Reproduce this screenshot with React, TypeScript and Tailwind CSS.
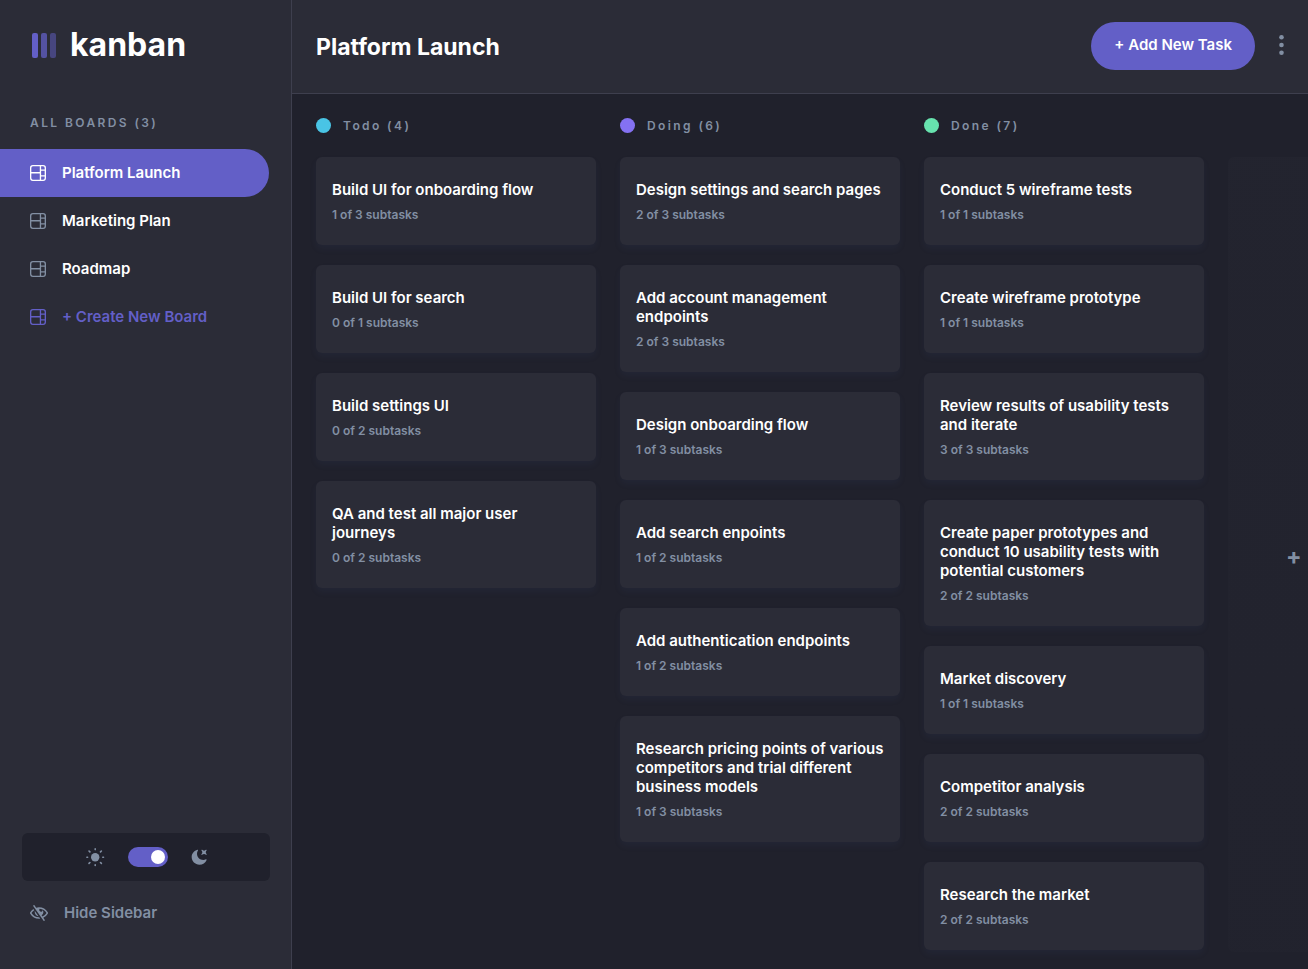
import { useState } from 'react';

type Task = { title: string; done: number; total: number };
type Column = { name: string; dot: string; tasks: Task[] };

const boards = ['Platform Launch', 'Marketing Plan', 'Roadmap'];

const columns: Column[] = [
  {
    name: 'Todo',
    dot: 'bg-[#49c4e5]',
    tasks: [
      { title: 'Build UI for onboarding flow', done: 1, total: 3 },
      { title: 'Build UI for search', done: 0, total: 1 },
      { title: 'Build settings UI', done: 0, total: 2 },
      { title: 'QA and test all major user journeys', done: 0, total: 2 },
    ],
  },
  {
    name: 'Doing',
    dot: 'bg-[#8471f2]',
    tasks: [
      { title: 'Design settings and search pages', done: 2, total: 3 },
      { title: 'Add account management endpoints', done: 2, total: 3 },
      { title: 'Design onboarding flow', done: 1, total: 3 },
      { title: 'Add search enpoints', done: 1, total: 2 },
      { title: 'Add authentication endpoints', done: 1, total: 2 },
      { title: 'Research pricing points of various competitors and trial different business models', done: 1, total: 3 },
    ],
  },
  {
    name: 'Done',
    dot: 'bg-[#67e2ae]',
    tasks: [
      { title: 'Conduct 5 wireframe tests', done: 1, total: 1 },
      { title: 'Create wireframe prototype', done: 1, total: 1 },
      { title: 'Review results of usability tests and iterate', done: 3, total: 3 },
      { title: 'Create paper prototypes and conduct 10 usability tests with potential customers', done: 2, total: 2 },
      { title: 'Market discovery', done: 1, total: 1 },
      { title: 'Competitor analysis', done: 2, total: 2 },
      { title: 'Research the market', done: 2, total: 2 },
    ],
  },
];

function BoardIcon() {
  return (
    <svg width="16" height="16" viewBox="0 0 16 16" fill="currentColor" aria-hidden="true" className="shrink-0">
      <path d="M0 2.889A2.889 2.889 0 0 1 2.889 0H13.11A2.889 2.889 0 0 1 16 2.889V13.11A2.888 2.888 0 0 1 13.111 16H2.89A2.889 2.889 0 0 1 0 13.111V2.89Zm1.333 5.555v4.667c0 .859.697 1.556 1.556 1.556h6.889V8.444H1.333Zm8.445-1.333V1.333h-6.89A1.556 1.556 0 0 0 1.334 2.89V7.11h8.445Zm1.333-1.333v4.444h3.556V5.778H11.11Zm3.556 5.778H11.11v3.11h2a1.556 1.556 0 0 0 1.556-1.555v-1.555Zm0-7.112V2.89a1.555 1.555 0 0 0-1.556-1.556h-2v3.111h3.556Z" />
    </svg>
  );
}

function SunIcon() {
  return (
    <svg width="19" height="19" viewBox="0 0 19 19" aria-hidden="true">
      <circle cx="9.2" cy="9.2" r="4.2" fill="currentColor" />
      <g stroke="currentColor" strokeWidth="1.6" strokeLinecap="round">
        <path d="M9.2.9v.7M9.2 16.8v.7M.9 9.2h.7M16.8 9.2h.7M3 3l.9.9M14.5 14.5l.9.9M3 15.4l.9-.9M14.5 3.9l.9-.9" />
      </g>
    </svg>
  );
}

function MoonIcon() {
  return (
    <svg width="16" height="16" viewBox="0 0 16 16" fill="currentColor" aria-hidden="true">
      <path d="M6.474.682c.434-.11.718.406.481.78A6.067 6.067 0 0 0 6.01 4.72c0 3.418 2.827 6.187 6.314 6.187.89.002 1.77-.182 2.584-.54.408-.18.894.165.724.57-1.16 2.775-3.944 4.73-7.194 4.73-4.292 0-7.771-3.41-7.771-7.615 0-3.541 2.466-6.518 5.807-7.37Zm8.433.07c.442-.294.969.232.674.674l-.525.787a1.943 1.943 0 0 0 0 2.157l.525.788c.295.441-.232.968-.674.673l-.787-.525a1.943 1.943 0 0 0-2.157 0l-.786.525c-.442.295-.97-.232-.675-.673l.525-.788a1.943 1.943 0 0 0 0-2.157l-.525-.787c-.295-.442.232-.968.674-.673l.787.525a1.943 1.943 0 0 0 2.157 0l.787-.526Z" />
    </svg>
  );
}

function HideIcon() {
  return (
    <svg width="18" height="16" viewBox="0 0 18 16" fill="currentColor" aria-hidden="true">
      <path d="M8.522 11.223a4.252 4.252 0 0 1-3.654-5.22l3.654 5.22ZM9 12.25A8.685 8.685 0 0 1 1.5 8a8.612 8.612 0 0 1 2.76-2.864l-.86-1.23A10.112 10.112 0 0 0 .208 7.238a1.5 1.5 0 0 0 0 1.524A10.187 10.187 0 0 0 9 13.75c.414 0 .828-.025 1.239-.074l-1-1.43A8.88 8.88 0 0 1 9 12.25Zm8.792-3.488a10.14 10.14 0 0 1-4.486 4.046l1.504 2.148a.375.375 0 0 1-.092.523l-.648.453a.375.375 0 0 1-.523-.092L3.19 1.044A.375.375 0 0 1 3.282.52L3.93.068a.375.375 0 0 1 .523.092l1.735 2.479A10.308 10.308 0 0 1 9 2.25c3.746 0 7.031 2 8.792 4.988a1.5 1.5 0 0 1 0 1.524ZM16.5 8a8.674 8.674 0 0 0-6.755-4.219A1.75 1.75 0 1 0 12.75 5v-.001a4.25 4.25 0 0 1-1.154 5.366l.834 1.192A8.641 8.641 0 0 0 16.5 8Z" />
    </svg>
  );
}

function Sidebar() {
  const [dark, setDark] = useState(true);
  return (
    <aside className="flex w-[292px] shrink-0 flex-col border-r border-[#3e3f4e] bg-[#2b2c37]">
      <div className="flex items-center gap-[14px] px-8 pt-[25px]">
        <svg width="24" height="25" viewBox="0 0 24 25" fill="#635fc7" aria-hidden="true">
          <rect width="6" height="25" rx="2" />
          <rect x="9" width="6" height="25" rx="2" opacity=".75" />
          <rect x="18" width="6" height="25" rx="2" opacity=".5" />
        </svg>
        <span className="text-[32px] leading-10 font-bold">kanban</span>
      </div>

      <h2 className="mt-[50px] px-[30px] text-xs leading-4 font-semibold tracking-[2.4px] text-[#828fa3]">
        ALL BOARDS ({boards.length})
      </h2>
      <nav className="mt-[18px] flex flex-col pr-[22px] text-[15px] font-semibold">
        {boards.map((board, i) => (
          <button
            key={board}
            type="button"
            className={
              i === 0
                ? 'flex h-12 items-center gap-4 rounded-r-full bg-[#635fc7] pl-[30px] text-white'
                : 'flex h-12 items-center gap-4 pl-[30px] text-[#828fa3]'
            }
          >
            <BoardIcon />
            <span className="text-white">{board}</span>
          </button>
        ))}
        <button type="button" className="flex h-12 items-center gap-4 pl-[30px] text-[#635fc7]">
          <BoardIcon />
          <span>+ Create New Board</span>
        </button>
      </nav>

      <div className="mt-auto px-[22px] pb-8 text-[#828fa3]">
        <div className="mr-[-1px] flex h-12 items-center justify-center gap-[23px] rounded-md bg-[#20212c]">
          <SunIcon />
          <label className="flex cursor-pointer">
            <input
              type="checkbox"
              role="switch"
              aria-label="Dark theme"
              checked={dark}
              onChange={(e) => setDark(e.target.checked)}
              className="flex h-5 w-10 cursor-pointer appearance-none items-center rounded-full bg-[#635fc7] px-[3px] before:size-[14px] before:rounded-full before:bg-white checked:justify-end"
            />
          </label>
          <MoonIcon />
        </div>
        <button type="button" className="mt-2 flex h-12 items-center gap-4 pl-2 text-[15px] font-semibold">
          <HideIcon />
          <span>Hide Sidebar</span>
        </button>
      </div>
    </aside>
  );
}

function TaskCard({ task }: { task: Task }) {
  return (
    <li>
      <button
        type="button"
        className="block w-full rounded-md bg-[#2b2c37] px-4 py-[23px] text-left shadow-[0_4px_6px_rgba(54,78,126,0.1)]"
      >
        <span className="block text-[15px] leading-[19px] font-semibold">{task.title}</span>
        <span className="mt-2 block text-xs leading-[15px] font-semibold text-[#828fa3]">
          {task.done} of {task.total} subtasks
        </span>
      </button>
    </li>
  );
}

export default function App() {
  return (
    <div className="flex h-screen overflow-hidden bg-[#20212c] font-['Inter',sans-serif] text-white">
      <Sidebar />
      <div className="flex min-w-0 flex-1 flex-col">
        <header className="flex h-[94px] shrink-0 items-center justify-between border-b border-[#3e3f4e] bg-[#2b2c37] px-6">
          <h1 className="text-[23px] leading-[30px] font-bold">Platform Launch</h1>
          <div className="flex items-center gap-6 pb-0.5">
            <button type="button" className="h-12 rounded-full bg-[#635fc7] px-[23px] text-[15px] font-semibold">
              + Add New Task
            </button>
            <button type="button" aria-label="Board options" className="pb-0.5 text-[#828fa3]">
              <svg width="5" height="20" viewBox="0 0 5 20" fill="currentColor" aria-hidden="true">
                <circle cx="2.5" cy="2.3" r="2.3" />
                <circle cx="2.5" cy="10" r="2.3" />
                <circle cx="2.5" cy="17.7" r="2.3" />
              </svg>
            </button>
          </div>
        </header>

        <main className="flex flex-1 gap-6 overflow-auto px-6 py-6 [scrollbar-width:none]">
          {columns.map((column) => (
            <section key={column.name} className="w-[280px] shrink-0">
              <h2 className="flex items-center gap-3 text-xs leading-[15px] font-semibold tracking-[2.4px] text-[#828fa3]">
                <span className={`size-[15px] rounded-full ${column.dot}`} />
                {column.name} ({column.tasks.length})
              </h2>
              <ul className="mt-6 flex flex-col gap-5">
                {column.tasks.map((task) => (
                  <TaskCard key={task.title} task={task} />
                ))}
              </ul>
            </section>
          ))}
          <button
            type="button"
            className="mt-[39px] min-h-[795px] w-[280px] shrink-0 self-start rounded-md bg-linear-to-b from-[#2b2c37]/25 to-[#2b2c37]/15 pt-2 text-[23px] font-bold text-[#828fa3]"
          >
            + New Column
          </button>
        </main>
      </div>
    </div>
  );
}
